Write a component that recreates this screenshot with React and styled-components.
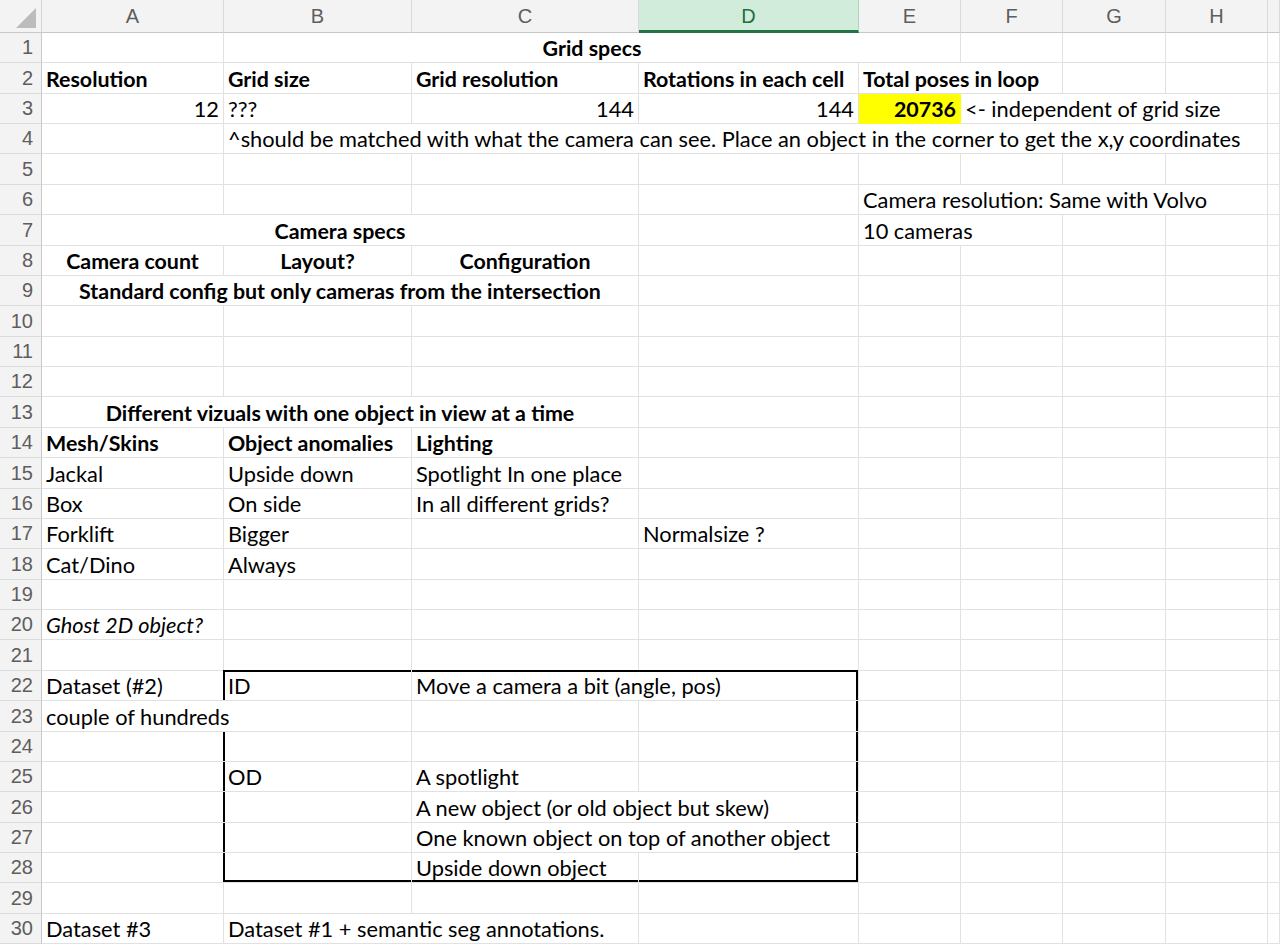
import React from "react";
import styled, { createGlobalStyle, css } from "styled-components";

const Global = createGlobalStyle`
  html, body { margin: 0; padding: 0; background: #fff; overflow: hidden; }
  #root { width: 1280px; height: 949px; overflow: hidden; }
`;

const TEMPLATE = "42px 182px 188px 227px 220px 102px 102px 103px 102px 1fr";
const LETTERS = ["A", "B", "C", "D", "E", "F", "G", "H", ""];
const ROW_H = 30.37;

const Sheet = styled.div`
  width: 1280px;
  display: flex;
  flex-direction: column;
  font-family: Lato, "Liberation Sans", sans-serif;
  font-size: 21.8px;
  color: #000;
`;

const HeaderRow = styled.div`
  display: grid;
  grid-template-columns: ${TEMPLATE};
  height: 33px;
`;

const Corner = styled.div`
  position: relative;
  background: #f3f3f3;
  border-right: 1px solid #d4d4d4;
  border-bottom: 1px solid #c8c8c8;
`;

const CornerTriangle = styled.svg`
  position: absolute;
  right: 5px;
  bottom: 4px;
`;

const ColHead = styled.div`
  display: flex;
  align-items: center;
  justify-content: center;
  background: ${(p) => (p.$active ? "#d2ecdc" : "#f3f3f3")};
  color: ${(p) => (p.$active ? "#1e6e40" : "#5e5e5e")};
  border-right: 1px solid ${(p) => (p.$active ? "#a9d5b9" : "#dadada")};
  border-bottom: ${(p) => (p.$active ? "3px solid #217346" : "1px solid #c8c8c8")};
  font-family: "Liberation Sans", Arial, sans-serif;
  font-size: 20px;
  padding-top: ${(p) => (p.$active ? "2px" : "0")};
  box-sizing: border-box;
`;

const Row = styled.div`
  display: grid;
  grid-template-columns: ${TEMPLATE};
  height: ${(p) => p.$h}px;
`;

const RowHead = styled.div`
  display: flex;
  align-items: center;
  justify-content: flex-end;
  padding-right: 8px;
  background: #f3f3f3;
  color: #5e5e5e;
  border-right: 1px solid #c8c8c8;
  border-bottom: 1px solid #dadada;
  font-family: "Liberation Sans", Arial, sans-serif;
  font-size: 20px;
  box-sizing: border-box;
`;

const Cell = styled.div`
  position: relative;
  grid-column: span ${(p) => p.$span};
  display: flex;
  align-items: flex-end;
  justify-content: ${(p) =>
    p.$align === "right" ? "flex-end" : p.$align === "center" ? "center" : "flex-start"};
  padding: 0 4px 2px 4px;
  box-sizing: border-box;
  white-space: nowrap;
  line-height: 24px;
  font-size: ${(p) => (p.$bold ? "21.4px" : "21.8px")};
  font-weight: ${(p) => (p.$bold ? 700 : 400)};
  font-style: ${(p) => (p.$italic ? "italic" : "normal")};
  background: ${(p) => p.$fill || "transparent"};
  border-right: 1px solid ${(p) => (p.$fill ? p.$fill : "#e1e1e1")};
  border-bottom: 1px solid ${(p) => (p.$fill ? p.$fill : "#e1e1e1")};
  ${(p) =>
    (p.$t || p.$l || p.$r || p.$b) &&
    css`
      &::after {
        content: "";
        position: absolute;
        pointer-events: none;
        top: ${p.$t ? "-1px" : "0"};
        left: ${p.$l ? "-1px" : "0"};
        right: 0;
        bottom: 0;
        border-top: ${p.$t ? "2px solid #000" : "none"};
        border-left: ${p.$l ? "2px solid #000" : "none"};
        border-right: ${p.$r ? "2px solid #000" : "none"};
        border-bottom: ${p.$b ? "2px solid #000" : "none"};
      }
    `}
`;

// col index: A=0 ... H=7, I=8
const DATA = {
  1: [{ c: 1, span: 4, text: "Grid specs", bold: true, align: "center" }],
  2: [
    { c: 0, text: "Resolution", bold: true },
    { c: 1, text: "Grid size", bold: true },
    { c: 2, text: "Grid resolution", bold: true },
    { c: 3, text: "Rotations in each cell", bold: true },
    { c: 4, span: 2, text: "Total poses in loop", bold: true },
  ],
  3: [
    { c: 0, text: "12", align: "right" },
    { c: 1, text: "???" },
    { c: 2, text: "144", align: "right" },
    { c: 3, text: "144", align: "right" },
    { c: 4, text: "20736", align: "right", bold: true, fill: "#ffff00" },
    { c: 5, span: 3, text: "<- independent of grid size" },
  ],
  4: [
    {
      c: 1,
      span: 7,
      text: "^should be matched with what the camera can see. Place an object in the corner to get the x,y coordinates",
    },
  ],
  6: [{ c: 4, span: 4, text: "Camera resolution: Same with Volvo" }],
  7: [
    { c: 0, span: 3, text: "Camera specs", bold: true, align: "center" },
    { c: 4, span: 2, text: "10 cameras" },
  ],
  8: [
    { c: 0, text: "Camera count", bold: true, align: "center" },
    { c: 1, text: "Layout?", bold: true, align: "center" },
    { c: 2, text: "Configuration", bold: true, align: "center" },
  ],
  9: [
    {
      c: 0,
      span: 3,
      text: "Standard config but only cameras from the intersection",
      bold: true,
      align: "center",
    },
  ],
  13: [
    {
      c: 0,
      span: 3,
      text: "Different vizuals with one object in view at a time",
      bold: true,
      align: "center",
    },
  ],
  14: [
    { c: 0, text: "Mesh/Skins", bold: true },
    { c: 1, text: "Object anomalies", bold: true },
    { c: 2, text: "Lighting", bold: true },
  ],
  15: [
    { c: 0, text: "Jackal" },
    { c: 1, text: "Upside down" },
    { c: 2, text: "Spotlight In one place" },
  ],
  16: [
    { c: 0, text: "Box" },
    { c: 1, text: "On side" },
    { c: 2, text: "In all different grids?" },
  ],
  17: [
    { c: 0, text: "Forklift" },
    { c: 1, text: "Bigger" },
    { c: 3, text: "Normalsize ?" },
  ],
  18: [
    { c: 0, text: "Cat/Dino" },
    { c: 1, text: "Always" },
  ],
  20: [{ c: 0, text: "Ghost 2D object?", italic: true }],
  22: [
    { c: 0, text: "Dataset (#2)" },
    { c: 1, text: "ID", t: true, l: true },
    { c: 2, span: 2, text: "Move a camera a bit (angle, pos)", t: true, r: true },
  ],
  23: [
    { c: 0, span: 2, text: "couple of hundreds" },
    { c: 3, r: true },
  ],
  24: [
    { c: 1, l: true },
    { c: 3, r: true },
  ],
  25: [
    { c: 1, text: "OD", l: true },
    { c: 2, text: "A spotlight" },
    { c: 3, r: true },
  ],
  26: [
    { c: 1, l: true },
    { c: 2, span: 2, text: "A new object (or old object but skew)", r: true },
  ],
  27: [
    { c: 1, l: true },
    { c: 2, span: 2, text: "One known object on top of another object", r: true },
  ],
  28: [
    { c: 1, l: true, b: true },
    { c: 2, text: "Upside down object", b: true },
    { c: 3, r: true, b: true },
  ],
  30: [
    { c: 0, text: "Dataset #3" },
    { c: 1, span: 2, text: "Dataset #1 + semantic seg annotations." },
  ],
};

function buildCells(rowNum) {
  const defs = DATA[rowNum] || [];
  const out = [];
  let c = 0;
  while (c < 9) {
    const d = defs.find((x) => x.c === c);
    if (d) {
      const span = d.span || 1;
      out.push(
        <Cell
          key={c}
          $span={span}
          $align={d.align}
          $bold={d.bold}
          $italic={d.italic}
          $fill={d.fill}
          $t={d.t}
          $l={d.l}
          $r={d.r}
          $b={d.b}
        >
          {d.text}
        </Cell>
      );
      c += span;
    } else {
      out.push(<Cell key={c} $span={1} />);
      c += 1;
    }
  }
  return out;
}

const lineAt = (i) => Math.round(32 + ROW_H * i);

export default function App() {
  const rows = [];
  for (let r = 1; r <= 30; r++) {
    const h = lineAt(r) - lineAt(r - 1);
    rows.push(
      <Row key={r} $h={h}>
        <RowHead>{r}</RowHead>
        {buildCells(r)}
      </Row>
    );
  }
  return (
    <>
      <Global />
      <Sheet>
        <HeaderRow>
          <Corner>
            <CornerTriangle width="20" height="20" viewBox="0 0 20 20">
              <polygon points="20,0 20,20 0,20" fill="#bcbcbc" />
            </CornerTriangle>
          </Corner>
          {LETTERS.map((l, i) => (
            <ColHead key={i} $active={l === "D"}>
              {l}
            </ColHead>
          ))}
        </HeaderRow>
        {rows}
      </Sheet>
    </>
  );
}
